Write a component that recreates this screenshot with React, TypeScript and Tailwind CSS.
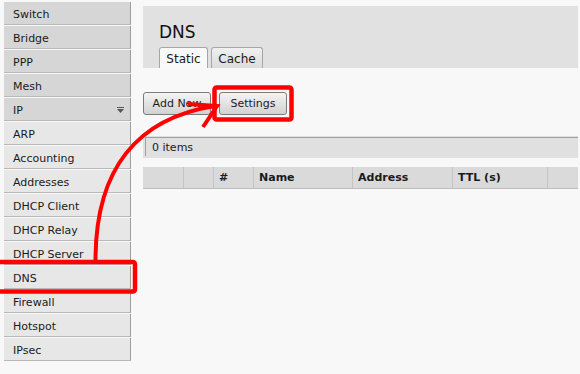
import React from 'react';

const topItems = ['Switch', 'Bridge', 'PPP', 'Mesh'];
const ipItems = ['ARP', 'Accounting', 'Addresses', 'DHCP Client', 'DHCP Relay', 'DHCP Server', 'DNS', 'Firewall', 'Hotspot', 'IPsec'];

const columns = [
  { label: '', w: 'w-[41px]' },
  { label: '', w: 'w-[30px]' },
  { label: '#', w: 'w-[40px]' },
  { label: 'Name', w: 'w-[99px]' },
  { label: 'Address', w: 'w-[100px]' },
  { label: 'TTL (s)', w: 'w-[95px]' },
];

function MenuItem({ label, sub, children }: { label: string; sub?: boolean; children?: React.ReactNode }) {
  return (
    <div
      className={`flex h-[23px] mb-px items-center justify-between border-b border-r border-b-[#b8b8b8] border-r-[#9e9e9e] pl-[9px] pr-[6px] pt-[4px] ${sub ? 'bg-[#e7e7e7]' : 'bg-[#d6d6d6]'}`}
    >
      <span>{label}</span>
      {children}
    </div>
  );
}

export default function App() {
  return (
    <div
      className="relative flex h-[374px] w-[580px] overflow-hidden bg-[#f8f8f8] text-[11px] text-[#1a1a1a]"
      style={{ fontFamily: '"DejaVu Sans", Verdana, sans-serif' }}
    >
      {/* sidebar */}
      <div className="flex w-[131px] shrink-0 flex-col pl-[4px] pt-[2px]">
        {topItems.map(l => (
          <MenuItem key={l} label={l} />
        ))}
        <MenuItem label="IP">
          <svg width="7" height="6" viewBox="0 0 7 6" className="mb-[3px]">
            <rect x="0" y="0" width="7" height="1" fill="#555" />
            <path d="M0 2 L7 2 L3.5 6 Z" fill="#555" />
          </svg>
        </MenuItem>
        {ipItems.map(l => (
          <MenuItem key={l} label={l} sub />
        ))}
      </div>

      {/* content */}
      <div className="ml-[12px] flex w-[435px] flex-col">
        <div className="mt-[6px] flex h-[62px] flex-col justify-end bg-[#e1e1e1] pl-[16px]">
          <div className="mb-[5px] text-[17px] leading-[20px] text-[#111]">DNS</div>
          <div className="flex gap-[3px] text-[12px]">
            <div className="flex h-[21px] w-[49px] items-center justify-center rounded-t-[3px] border border-b-0 border-[#a6a6a6] bg-[#f9f9f9] pt-[2px]">
              Static
            </div>
            <div className="flex h-[21px] w-[52px] items-center justify-center rounded-t-[3px] border border-b-0 border-[#a6a6a6] bg-gradient-to-b from-[#f0f0f0] to-[#dcdcdc] pt-[2px]">
              Cache
            </div>
          </div>
        </div>

        <div className="mt-[24px] flex gap-[8px]">
          <button className="flex h-[23px] w-[68px] items-center justify-center rounded-[3px] border border-[#7c7c7c] bg-gradient-to-b from-[#f4f4f4] to-[#d2d2d2] pt-[2px]">
            Add New
          </button>
          <button className="flex h-[23px] w-[68px] items-center justify-center rounded-[3px] border border-[#7c7c7c] bg-gradient-to-b from-[#f4f4f4] to-[#d2d2d2] pt-[2px]">
            Settings
          </button>
        </div>

        <div className="mt-[21px] h-[22px] bg-[#e0e0e0] pl-[2px] pt-px">
          <div className="flex h-[19px] items-center border-l border-t border-[#a0a0a0] pl-[6px] pt-[2px]">0 items</div>
        </div>

        <div className="mt-[9px] flex h-[22px] border-b border-[#bdbdbd] bg-[#dadada] font-bold">
          {columns.map((c, i) => (
            <div key={i} className={`${c.w} flex items-center border-r border-[#c4c4c4] pl-[5px] pt-[2px]`}>
              {c.label}
            </div>
          ))}
        </div>
      </div>

      {/* annotations */}
      <svg className="pointer-events-none absolute left-0 top-0" width="580" height="374" viewBox="0 0 580 374">
        <rect x="214.5" y="87.5" width="77" height="32" rx="2" fill="none" stroke="#f00" strokeWidth="4.5" />
        <rect x="-6" y="262" width="141" height="29.5" rx="2" fill="none" stroke="#f00" strokeWidth="4.5" />
        <path d="M95.5 262 C 95 168 138 118 215 106" fill="none" stroke="#f00" strokeWidth="4" />
        <path d="M188 104 L217 106 L203 127" fill="none" stroke="#f00" strokeWidth="4" strokeLinejoin="miter" />
      </svg>
    </div>
  );
}
